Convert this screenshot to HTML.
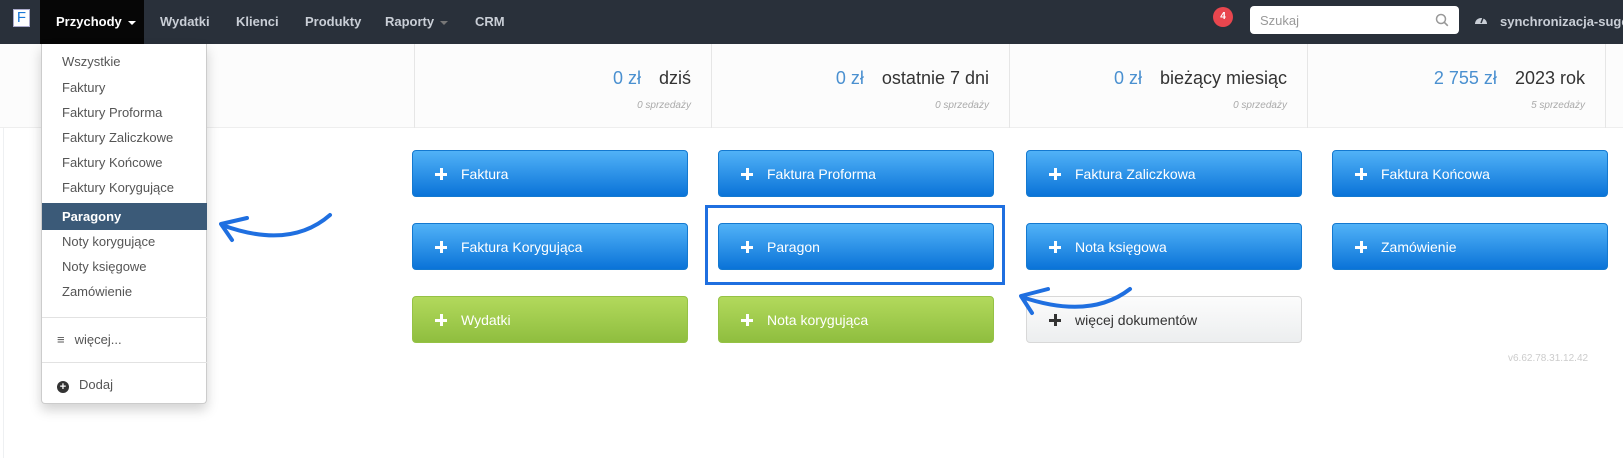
<!DOCTYPE html>
<html><head><meta charset="utf-8"><style>
*{box-sizing:border-box;margin:0;padding:0}
body{width:1623px;height:472px;background:#fff;font-family:"Liberation Sans",sans-serif;position:relative;overflow:hidden;font-size:14px}
.nav{position:absolute;left:0;top:0;width:1623px;height:44px;background:#29303a;overflow:hidden}
.nav .t{position:absolute;top:14px;color:#c9ced6;font-size:13px;font-weight:bold;white-space:nowrap}
.act{position:absolute;left:40px;top:0;width:104px;height:44px;background:#060606}
.logo{position:absolute;left:13px;top:9px;width:17px;height:18px;background:#fff;border:1px solid #aac;color:#1b78d8;font-size:15px;line-height:16px;text-align:center}
.caret{display:inline-block;border-top:4px solid;border-left:4px solid transparent;border-right:4px solid transparent;vertical-align:middle;margin-left:6px}
.badge{position:absolute;left:1213px;top:7px;width:20px;height:20px;border-radius:50%;background:#e8464e;color:#fff;font-size:10px;font-weight:bold;text-align:center;line-height:20px}
.search{position:absolute;left:1250px;top:6px;width:209px;height:28px;background:#fff;border-radius:4px;color:#999;font-size:13px;padding:7px 10px}
.stats{position:absolute;left:0;top:44px;width:1623px;height:84px;background:#fcfcfc;border-bottom:1px solid #eee}
.st{position:absolute;top:44px;height:84px;border-left:1px solid #e6e6e6}
.st .v{position:absolute;right:20px;top:24px;font-size:18px;color:#333;white-space:nowrap}
.st .v b{font-weight:normal;color:#4a90d0;margin-right:18px}
.st .s{position:absolute;right:20px;top:56px;font-size:10px;font-style:italic;color:#aaa;white-space:nowrap}
.dd{position:absolute;left:41px;top:44px;width:166px;height:360px;background:#fff;border:1px solid #ccc;border-top:none;border-radius:0 0 4px 4px;box-shadow:0 6px 12px rgba(0,0,0,.18)}
.dd div{position:absolute;left:20px;font-size:13px;color:#555}
.dd .hl{left:0;width:165px;height:27px;background:#3b5a78;color:#fff;font-weight:bold;padding:6px 20px}
.dd hr{position:absolute;left:0;width:165px;border:none;border-top:1px solid #e2e2e2}
.btn{position:absolute;width:276px;height:47px;border-radius:4px;color:#fff;font-size:14px;padding:15px 0 0 48px;background:linear-gradient(#51b2f7,#0a73d8);border:1px solid #1479d0}
.btn:before{content:"";position:absolute;left:22px;top:17px;width:12px;height:12px;background:linear-gradient(currentColor,currentColor) center/12px 3px no-repeat,linear-gradient(currentColor,currentColor) center/3px 12px no-repeat}
.g{background:linear-gradient(#b2d95c,#8fbe3f);border-color:#95c245}
.w{background:linear-gradient(#fcfcfc,#eceeef);border-color:#d8d8d8;color:#333}
</style></head><body>
<div class="nav">
<div class="logo">F</div>
<div class="act"></div>
<span class="t" style="left:56px;color:#fff">Przychody<span class="caret"></span></span>
<span class="t" style="left:160px">Wydatki</span>
<span class="t" style="left:236px">Klienci</span>
<span class="t" style="left:305px">Produkty</span>
<span class="t" style="left:385px">Raporty<span class="caret" style="color:#777"></span></span>
<span class="t" style="left:475px">CRM</span>
<div class="badge">4</div>
<div class="search">Szukaj<svg style="position:absolute;right:10px;top:7px" width="14" height="14" viewBox="0 0 14 14"><circle cx="6" cy="6" r="4.5" fill="none" stroke="#999" stroke-width="1.5"/><path d="M9.3 9.3l3.5 3.5" stroke="#999" stroke-width="1.6"/></svg></div>
<svg style="position:absolute;left:1474px;top:13px" width="14" height="12" viewBox="0 0 14 12"><path d="M1 11A6 6 0 0 1 13 11Z" fill="#c9ced6"/><path d="M7 10L9 5" stroke="#29303a" stroke-width="1.5"/></svg>
<span class="t" style="left:1500px">synchronizacja-suges</span>
</div>
<div class="stats"></div>
<div class="st" style="left:414px;width:297px"><div class="v"><b>0 zł</b>dziś</div><div class="s">0 sprzedaży</div></div>
<div class="st" style="left:711px;width:298px"><div class="v"><b>0 zł</b>ostatnie 7 dni</div><div class="s">0 sprzedaży</div></div>
<div class="st" style="left:1009px;width:298px"><div class="v"><b>0 zł</b>bieżący miesiąc</div><div class="s">0 sprzedaży</div></div>
<div class="st" style="left:1307px;width:299px;border-right:1px solid #e6e6e6"><div class="v"><b>2 755 zł</b>2023 rok</div><div class="s">5 sprzedaży</div></div>
<div style="position:absolute;left:3px;top:128px;width:1px;height:330px;background:#eef0f2"></div>

<div class="btn" style="left:412px;top:150px">Faktura</div>
<div class="btn" style="left:718px;top:150px">Faktura Proforma</div>
<div class="btn" style="left:1026px;top:150px">Faktura Zaliczkowa</div>
<div class="btn" style="left:1332px;top:150px">Faktura Końcowa</div>
<div class="btn" style="left:412px;top:223px">Faktura Korygująca</div>
<div class="btn" style="left:718px;top:223px">Paragon</div>
<div class="btn" style="left:1026px;top:223px">Nota księgowa</div>
<div class="btn" style="left:1332px;top:223px">Zamówienie</div>
<div class="btn g" style="left:412px;top:296px">Wydatki</div>
<div class="btn g" style="left:718px;top:296px">Nota korygująca</div>
<div class="btn w" style="left:1026px;top:296px">więcej dokumentów</div>
<div style="position:absolute;left:705px;top:205px;width:300px;height:80px;border:3px solid #1f6fe0"></div>
<div style="position:absolute;left:1508px;top:353px;font-size:10px;color:#ccc">v6.62.78.31.12.42</div>

<div class="dd">
<div style="top:10px">Wszystkie</div>
<div style="top:36px">Faktury</div>
<div style="top:61px">Faktury Proforma</div>
<div style="top:86px">Faktury Zaliczkowe</div>
<div style="top:111px">Faktury Końcowe</div>
<div style="top:136px">Faktury Korygujące</div>
<div class="hl" style="top:159px">Paragony</div>
<div style="top:190px">Noty korygujące</div>
<div style="top:215px">Noty księgowe</div>
<div style="top:240px">Zamówienie</div>
<hr style="top:273px">
<div style="top:288px;left:15px"><span style="font-weight:bold;margin-right:10px">≡</span>więcej...</div>
<hr style="top:318px">
<div style="left:15px;top:333px"><span style="display:inline-block;width:12px;height:12px;border-radius:50%;background:#333;color:#fff;font-size:11px;line-height:12px;text-align:center;font-weight:bold;margin-right:10px;vertical-align:-1px">+</span>Dodaj</div>
</div>

<svg style="position:absolute;left:0;top:0" width="1623" height="472">
<g fill="none" stroke="#1f6fe0" stroke-width="4" stroke-linecap="round" stroke-linejoin="round">
<path d="M330 215Q290 250 222 225"/><path d="M247 218L221 224L232 240"/>
<path d="M1130 289Q1090 320 1022 297"/><path d="M1048 289L1021 296L1032 313"/>
</g></svg>
</body></html>
